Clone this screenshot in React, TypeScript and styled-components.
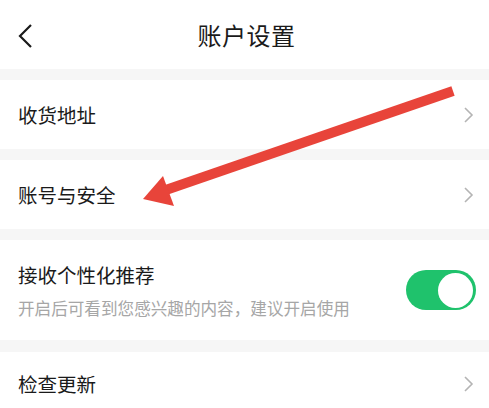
import styled, { createGlobalStyle } from "styled-components";

const Global = createGlobalStyle`
  html, body {
    margin: 0;
    padding: 0;
    background: #f6f6f6;
    font-family: "Noto Sans CJK SC", "Noto Sans", sans-serif;
  }
`;

const Page = styled.div`
  position: relative;
  width: 489px;
  height: 408px;
  overflow: hidden;
  background: #f6f6f6;
  display: flex;
  flex-direction: column;
`;

const Header = styled.header`
  height: 69px;
  flex-shrink: 0;
  background: #fff;
  display: flex;
  align-items: center;
  justify-content: center;
  position: relative;
  margin-bottom: 11px;
`;

const BackButton = styled.div`
  position: absolute;
  left: 16px;
  top: 22px;
  width: 20px;
  height: 28px;
`;

const Title = styled.h1`
  margin: 0;
  font-size: 24px;
  font-weight: 400;
  color: #1a1a1a;
  letter-spacing: 0.5px;
  padding-left: 4px;
`;

const Row = styled.div<{ $height: number; $gap?: number }>`
  height: ${(p) => p.$height}px;
  flex-shrink: 0;
  background: #fff;
  display: flex;
  align-items: center;
  justify-content: space-between;
  padding: 0 14px 0 18px;
  margin-bottom: ${(p) => p.$gap ?? 0}px;
`;

const Texts = styled.div`
  display: flex;
  flex-direction: column;
  gap: 8px;
`;

const Label = styled.span`
  font-size: 19.5px;
  color: #1a1a1a;
  line-height: 28px;
`;

const Sub = styled.span`
  font-size: 16.6px;
  color: #a6a6a6;
  line-height: 22px;
`;

const Toggle = styled.div`
  width: 70px;
  height: 40px;
  border-radius: 20px;
  background: #1fc26c;
  display: flex;
  align-items: center;
  justify-content: flex-end;
  padding: 0 3px;
  box-sizing: border-box;
  margin-right: -1px;
`;

const Knob = styled.div`
  width: 35px;
  height: 35px;
  border-radius: 50%;
  background: #fff;
`;

const ArrowLayer = styled.svg`
  position: absolute;
  left: 0;
  top: 0;
  pointer-events: none;
`;

function Chevron() {
  return (
    <svg width="12" height="18" viewBox="0 0 12 18">
      <path d="M2 2 L9 9 L2 16" fill="none" stroke="#b4b4b4" strokeWidth="1.6" />
    </svg>
  );
}

export default function App() {
  return (
    <Page>
      <Global />
      <Header>
        <BackButton>
          <svg width="20" height="28" viewBox="0 0 20 28">
            <path d="M15 3 L4 14 L15 25" fill="none" stroke="#1a1a1a" strokeWidth="2.2" />
          </svg>
        </BackButton>
        <Title>账户设置</Title>
      </Header>
      <Row $height={69} $gap={11}>
        <Label>收货地址</Label>
        <Chevron />
      </Row>
      <Row $height={69} $gap={11}>
        <Label>账号与安全</Label>
        <Chevron />
      </Row>
      <Row $height={100} $gap={12}>
        <Texts>
          <Label>接收个性化推荐</Label>
          <Sub>开启后可看到您感兴趣的内容，建议开启使用</Sub>
        </Texts>
        <Toggle>
          <Knob />
        </Toggle>
      </Row>
      <Row $height={64}>
        <Label>检查更新</Label>
        <Chevron />
      </Row>
      <ArrowLayer width="489" height="408" viewBox="0 0 489 408">
        <line x1="453" y1="91" x2="160" y2="192" stroke="#e8443a" strokeWidth="10" />
        <polygon points="143,199 163,176 174,206" fill="#e8443a" />
      </ArrowLayer>
    </Page>
  );
}
